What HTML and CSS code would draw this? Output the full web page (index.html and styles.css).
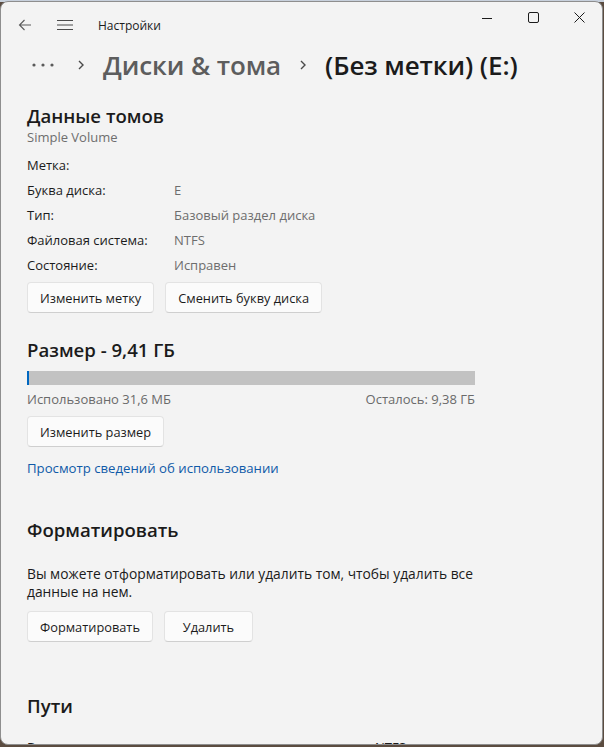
FILE: index.html
```html
<!DOCTYPE html>
<html lang="ru">
<head>
<meta charset="utf-8">
<title>Настройки</title>
<link rel="stylesheet" href="styles.css">
</head>
<body>
<div class="window">
  <div class="titlebar">
    <div class="nav-btn"><svg width="14" height="12" viewBox="0 0 14 12"><path d="M13 6H1.5M6.5 1L1.5 6l5 5" fill="none" stroke="#5a5a5a" stroke-width="1.1"/></svg></div>
    <div class="nav-btn"><svg width="16" height="12" viewBox="0 0 16 12"><path d="M0 1.5h16M0 6h16M0 10.5h16" fill="none" stroke="#4a4a4a" stroke-width="1.1"/></svg></div>
    <div class="app-title">Настройки</div>
    <div class="controls">
      <div class="ctl"><svg width="10" height="10" viewBox="0 0 10 10"><path d="M0 5.5h10" stroke="#1b1b1b" stroke-width="1"/></svg></div>
      <div class="ctl"><svg width="11" height="11" viewBox="0 0 11 11"><rect x="0.5" y="0.5" width="10" height="10" rx="1.5" fill="none" stroke="#1b1b1b" stroke-width="1"/></svg></div>
      <div class="ctl"><svg width="11" height="11" viewBox="0 0 11 11"><path d="M0.5 0.5l10 10M10.5 0.5l-10 10" stroke="#1b1b1b" stroke-width="1"/></svg></div>
    </div>
  </div>

  <div class="breadcrumb">
    <svg class="dots" width="22" height="4" viewBox="0 0 22 4"><circle cx="2" cy="2" r="1.6" fill="#5a5a5a"/><circle cx="11" cy="2" r="1.6" fill="#5a5a5a"/><circle cx="20" cy="2" r="1.6" fill="#5a5a5a"/></svg>
    <svg class="chev" width="6" height="10" viewBox="0 0 6 10"><path d="M1 1l4 4-4 4" fill="none" stroke="#4a4a4a" stroke-width="1.4"/></svg>
    <span class="crumb">Диски &amp; тома</span>
    <svg class="chev" width="6" height="10" viewBox="0 0 6 10"><path d="M1 1l4 4-4 4" fill="none" stroke="#4a4a4a" stroke-width="1.4"/></svg>
    <span class="crumb current">(Без метки) (E:)</span>
  </div>

  <div class="content">
    <section class="sec info">
      <h2 class="h">Данные томов</h2>
      <div class="sub">Simple Volume</div>
      <div class="props">
        <div class="row"><span class="k">Метка:</span><span class="v"></span></div>
        <div class="row"><span class="k">Буква диска:</span><span class="v">E</span></div>
        <div class="row"><span class="k">Тип:</span><span class="v">Базовый раздел диска</span></div>
        <div class="row"><span class="k">Файловая система:</span><span class="v">NTFS</span></div>
        <div class="row"><span class="k">Состояние:</span><span class="v">Исправен</span></div>
      </div>
      <div class="btns">
        <button class="btn">Изменить метку</button>
        <button class="btn">Сменить букву диска</button>
      </div>
    </section>

    <section class="sec size">
      <h2 class="h">Размер - 9,41 ГБ</h2>
      <div class="bar"><div class="used" style="width:2px"></div></div>
      <div class="bar-labels"><span>Использовано 31,6 МБ</span><span>Осталось: 9,38 ГБ</span></div>
      <div class="btns"><button class="btn">Изменить размер</button></div>
      <a class="link" href="#">Просмотр сведений об использовании</a>
    </section>

    <section class="sec fmt">
      <h2 class="h">Форматировать</h2>
      <p class="desc">Вы можете отформатировать или удалить том, чтобы удалить все данные на нем.</p>
      <div class="btns">
        <button class="btn">Форматировать</button>
        <button class="btn wide">Удалить</button>
      </div>
    </section>

    <section class="sec paths">
      <h2 class="h">Пути</h2>
      <div class="row"><span class="k k2">В</span><span class="v3">NTFS</span></div>
    </section>
  </div>
</div>
</body>
</html>
```
FILE: styles.css
```css
html, body {
  margin: 0;
  padding: 0;
}
body {
  background: linear-gradient(#c7d0dc 0 2px, #5b4c40 2px);
  font-family: "Open Sans", "Noto Sans", sans-serif;
  color: #1b1b1b;
  width: 604px;
  height: 747px;
  overflow: hidden;
}
.window {
  margin-top: 1px;
  width: 603px;
  height: 744px;
  box-sizing: border-box;
  border: 1px solid #8e8e8e;
  border-radius: 8px;
  background: #f3f3f3;
  overflow: hidden;
  display: flex;
  flex-direction: column;
}
.titlebar {
  display: flex;
  align-items: flex-start;
  height: 44px;
  flex: none;
}
.nav-btn {
  width: 40px;
  height: 44px;
  box-sizing: border-box;
  padding-top: 2px;
  display: flex;
  align-items: center;
  justify-content: center;
}
.nav-btn:first-child {
  margin-left: 4px;
}
.app-title {
  margin-left: 13px;
  padding-top: 2px;
  font-size: 12px;
  line-height: 44px;
}
.controls {
  margin-left: auto;
  display: flex;
}
.ctl {
  width: 46px;
  height: 31px;
  display: flex;
  align-items: center;
  justify-content: center;
}
.breadcrumb {
  display: flex;
  align-items: center;
  height: 38px;
  flex: none;
}
.dots {
  margin-left: 31px;
  margin-right: 24px;
}
.chev {
  margin-right: 19px;
}
.crumb {
  font-size: 26px;
  font-weight: 600;
  color: #5d5d5d;
  margin-right: 19px;
  letter-spacing: -0.1px;
}
.crumb.current {
  color: #1b1b1b;
}
.content {
  padding: 0 26px;
}
.sec {
  display: flex;
  flex-direction: column;
  align-items: flex-start;
}
.h {
  margin: 0;
  font-size: 18.6px;
  font-weight: 600;
  line-height: 24px;
}
.info .h {
  margin-top: 20px;
}
.sub {
  font-size: 13px;
  line-height: 18px;
  color: #6e6e6e;
}
.props {
  margin-top: 7px;
  display: flex;
  flex-direction: column;
}
.row {
  display: flex;
  font-size: 13px;
  line-height: 25px;
}
.k {
  width: 147px;
}
.v {
  color: #6d6d6d;
}
.btns {
  display: flex;
  gap: 11px;
}
.info .btns {
  margin-top: 4px;
}
.btn {
  font-family: inherit;
  font-size: 12.8px;
  color: #1b1b1b;
  height: 31px;
  padding: 0 12px;
  background: #fbfbfb;
  border: 1px solid #e3e3e3;
  border-bottom-color: #cfcfcf;
  border-radius: 4px;
}
.btn.wide {
  width: 89px;
}
.size .h {
  margin-top: 25px;
}
.bar {
  margin-top: 9px;
  width: 448px;
  height: 14px;
  background: #c2c2c2;
}
.used {
  height: 100%;
  background: #0067c0;
}
.bar-labels {
  margin-top: 3px;
  width: 448px;
  display: flex;
  justify-content: space-between;
  font-size: 13px;
  line-height: 22px;
  color: #6a6a6a;
}
.size .btns {
  margin-top: 6px;
}
.link {
  margin-top: 12px;
  font-size: 13.2px;
  line-height: 18px;
  color: #0f5aa8;
  text-decoration: none;
}
.fmt .h {
  margin-top: 41px;
}
.desc {
  margin: 23px 0 0;
  width: 470px;
  font-size: 13.8px;
  line-height: 18px;
}
.fmt .btns {
  margin-top: 10px;
}
.paths .h {
  margin-top: 52px;
}
.paths .row {
  margin-top: 17px;
}
.k2 {
  width: 348px;
}
.v3 {
  color: #1b1b1b;
}
```
